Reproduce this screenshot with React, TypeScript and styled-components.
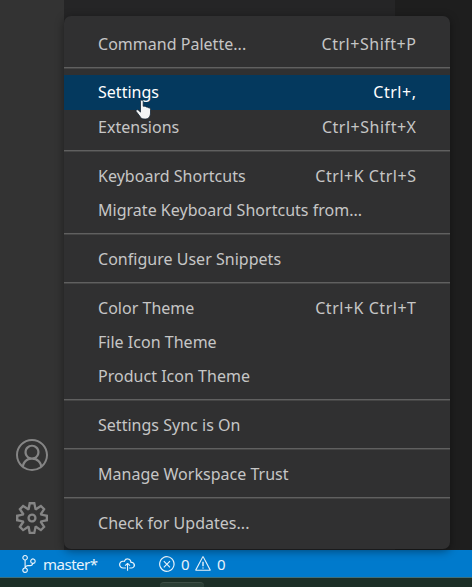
import React from "react";
import styled, { createGlobalStyle, css } from "styled-components";
import {
  VscAccount,
  VscCloudUpload,
  VscError,
  VscSettingsGear,
  VscSourceControl,
  VscWarning,
} from "react-icons/vsc";

const GlobalStyle = createGlobalStyle`
  * { box-sizing: border-box; }
  body { margin: 0; background: #1e1e1e; overflow: hidden; }
`;

const Window = styled.div`
  position: relative;
  display: flex;
  flex-direction: column;
  width: 472px;
  height: 587px;
  overflow: hidden;
  font-family: "Noto Sans", "Open Sans", sans-serif;
  font-size: 16px;
`;

const Workbench = styled.div`
  display: flex;
  height: 550px;
  flex: none;
`;

const ActivityBar = styled.nav`
  display: flex;
  flex-direction: column;
  justify-content: flex-end;
  align-items: center;
  gap: 31px;
  width: 64px;
  padding-bottom: 16px;
  background: #333333;
  color: #858585;
  svg { display: block; width: 32px; height: 32px; }
`;

const SideBar = styled.aside`
  width: 331px;
  background: #252526;
`;

const Editor = styled.main`
  flex: 1;
  background: #1e1e1e;
`;

const StatusBar = styled.footer`
  display: flex;
  align-items: center;
  flex: none;
  height: 28px;
  padding-left: 20px;
  background: #007acc;
  color: #e8f3fb;
  font-size: 15px;
  border-bottom: 1px solid #3c6f7c;
`;

const StatusItem = styled.span<{ $width: number; $tracking?: number }>`
  display: flex;
  align-items: center;
  gap: 5px;
  width: ${(p) => p.$width}px;
  padding-top: 1px;
  letter-spacing: ${(p) => p.$tracking ?? 0}px;
  line-height: 28px;
  svg { flex: none; width: 18px; height: 18px; }
`;

const Taskbar = styled.div`
  display: flex;
  align-items: flex-end;
  flex: 1;
  padding-left: 160px;
  background: #1d2f27;
`;

const TaskButton = styled.div`
  width: 44px;
  height: 5px;
  border-radius: 4px 4px 0 0;
  background: #2b3e35;
  border-top: 1px solid #3d4e46;
`;

const Menu = styled.div`
  position: absolute;
  left: 64px;
  top: 16px;
  width: 386px;
  height: 533px;
  padding: 10.4px 0;
  border-radius: 7px;
  background: #303031;
  box-shadow: 0 2px 10px rgba(0, 0, 0, 0.42);
`;

const MenuRow = styled.div<{ $active?: boolean }>`
  display: flex;
  justify-content: space-between;
  align-items: center;
  height: 34.3px;
  padding: 0 34px;
  color: #c6c6c6;
  white-space: pre;
  ${(p) =>
    p.$active &&
    css`
      background: #04395e;
      color: #ffffff;
    `}
`;

const Label = styled.span`
  letter-spacing: 0.02px;
`;

const Keys = styled.span`
  margin-right: -0.5px;
  letter-spacing: 0.52px;
`;

const Separator = styled.div`
  height: 14.55px;
  padding-top: 6px;
  &::before {
    content: "";
    display: block;
    height: 1px;
    background: #606060;
    box-shadow: 0 1px 0 #454545;
  }
`;

const Pointer = styled.svg`
  position: absolute;
  left: 135px;
  top: 99px;
  width: 17px;
  height: 21px;
`;

type Item = { label: string; keys?: string; active?: boolean };

const groups: Item[][] = [
  [{ label: "Command Palette...", keys: "Ctrl+Shift+P" }],
  [
    { label: "Settings", keys: "Ctrl+,", active: true },
    { label: "Extensions", keys: "Ctrl+Shift+X" },
  ],
  [
    { label: "Keyboard Shortcuts", keys: "Ctrl+K Ctrl+S" },
    { label: "Migrate Keyboard Shortcuts from..." },
  ],
  [{ label: "Configure User Snippets" }],
  [
    { label: "Color Theme", keys: "Ctrl+K Ctrl+T" },
    { label: "File Icon Theme" },
    { label: "Product Icon Theme" },
  ],
  [{ label: "Settings Sync is On" }],
  [{ label: "Manage Workspace Trust" }],
  [{ label: "Check for Updates..." }],
];

export default function App() {
  return (
    <Window>
      <GlobalStyle />
      <Workbench>
        <ActivityBar>
          <VscAccount />
          <VscSettingsGear />
        </ActivityBar>
        <SideBar />
        <Editor />
      </Workbench>
      <StatusBar>
        <StatusItem $width={98} $tracking={-0.5}>
          <VscSourceControl />
          <span>master*</span>
        </StatusItem>
        <StatusItem $width={40}>
          <VscCloudUpload />
        </StatusItem>
        <StatusItem $width={36}>
          <VscError />
          <span>0</span>
        </StatusItem>
        <StatusItem $width={36}>
          <VscWarning />
          <span>0</span>
        </StatusItem>
      </StatusBar>
      <Taskbar>
        <TaskButton />
      </Taskbar>
      <Menu>
        {groups.map((group, i) => (
          <React.Fragment key={i}>
            {i > 0 && <Separator />}
            {group.map((item) => (
              <MenuRow key={item.label} $active={item.active}>
                <Label>{item.label}</Label>
                {item.keys && <Keys>{item.keys}</Keys>}
              </MenuRow>
            ))}
          </React.Fragment>
        ))}
      </Menu>
      <Pointer viewBox="0 0 17 21">
        <path
          d="M5.5 2.2c0-1.6 2.7-1.6 2.7 0v5l1.2.1c1 0 1.5.3 1.7.7 1.1-.2 1.9.1 2.1.7 1.5-.1 2.3.5 2.3 1.8v3.5c0 3-1.7 6-4.8 6H9c-2 0-3.2-1-4.1-2.7L1.2 12.500c-.7-1.5 1-2.4 2.2-1.3l2.1 1.9z"
          fill="#f4f5f5"
          stroke="#152635"
          strokeWidth=".8"
        />
      </Pointer>
    </Window>
  );
}
